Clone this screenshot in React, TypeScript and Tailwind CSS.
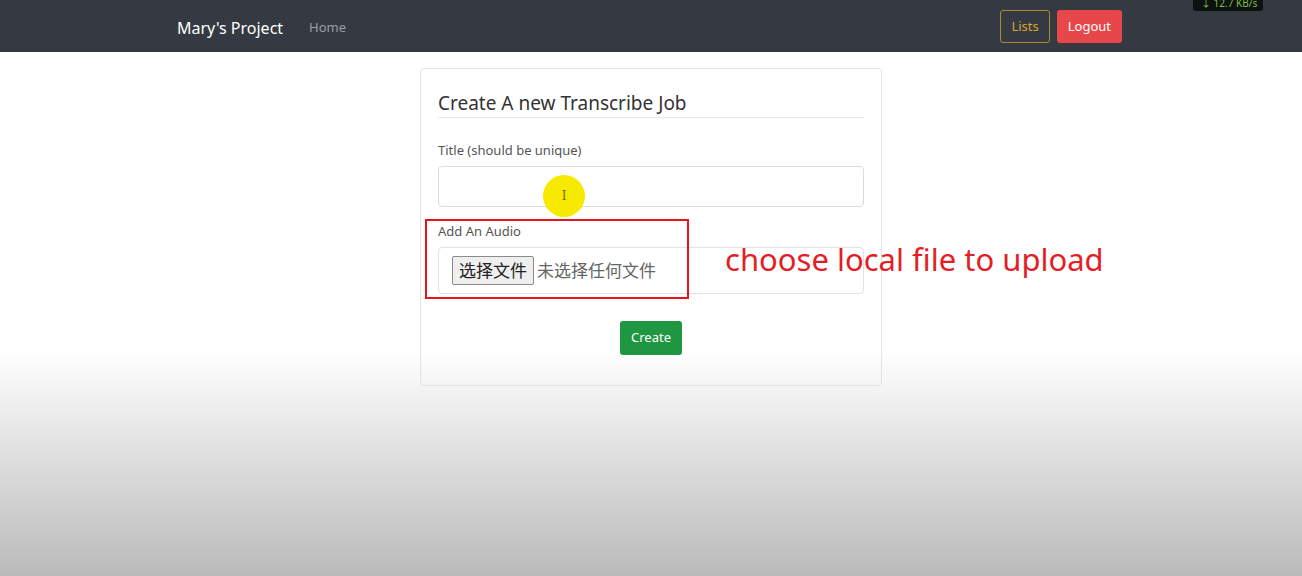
export default function App() {
  return (
    <div
      className="relative min-h-[576px] w-full bg-[linear-gradient(to_bottom,#ffffff_0px,#ffffff_350px,#bababa_576px)] text-[#333] overflow-hidden"
      style={{ fontFamily: '"Noto Sans", "Open Sans", "Noto Sans CJK SC", sans-serif' }}
    >
      {/* Navbar */}
      <nav className="h-[52px] bg-[#353a42] flex items-center pl-[177px] pr-[180px]">
        <span className="text-[16px] text-white pt-[3px]">Mary's Project</span>
        <span className="ml-[26px] text-[13px] text-[#9a9ea4] pt-[3px]">Home</span>
        <div className="ml-auto flex items-center gap-[7px] pt-[1px]">
          <button className="h-[33px] px-[10px] rounded-[3px] border border-[#a88a2c] text-[13px] text-[#d8a630]">Lists</button>
          <button className="h-[33px] px-[11px] rounded-[3px] bg-[#e8474a] text-[13px] text-white">Logout</button>
        </div>
      </nav>

      {/* network speed overlay */}
      <div className="absolute top-[-4px] left-[1193px] w-[70px] h-[15px] rounded-[3px] bg-[#0e1112] text-[10px] leading-[15px] text-[#7fbf3a] pl-[8px]">
        ↓ 12.7 KB/s
      </div>

      {/* Card */}
      <div className="mt-[16px] w-[462px] border border-[#e3e3e3] rounded-[4px] px-[17px] pt-[20px] pb-[30px] ml-[420px]">
        <h2 className="text-[19px] leading-[28px] text-[#333] border-b border-[#e8e8e8]">Create A new Transcribe Job</h2>

        <div className="mt-[23px] text-[13px] leading-[18px] text-[#555]">Title (should be unique)</div>
        <div className="mt-[7px] h-[41px] rounded-[4px] border border-[#dcdcdc] bg-white"></div>

        <div className="mt-[15px] text-[13px] leading-[18px] text-[#555]">Add An Audio</div>
        <div className="mt-[7px] h-[47px] rounded-[4px] border border-[#e2e2e2] bg-white flex items-center pl-[13px]">
          <span className="h-[29px] px-[6px] flex items-center rounded-[2px] border border-[#8a8a8a] bg-[#efefef] text-[17px] text-[#222]">选择文件</span>
          <span className="ml-[3px] text-[17px] text-[#666]">未选择任何文件</span>
        </div>

        <div className="mt-[27px] flex justify-center">
          <button className="h-[34px] px-[11px] rounded-[3px] bg-[#1f9742] text-[13px] text-white">Create</button>
        </div>
      </div>

      {/* annotation box */}
      <div className="absolute left-[425px] top-[219px] w-[264px] h-[80px] border-2 border-[#e5141d] pointer-events-none"></div>
      <div className="absolute left-[725px] top-[237px] text-[31px] leading-[44px] text-[#e41e26]">choose local file to upload</div>

      {/* cursor highlight */}
      <div className="absolute left-[543px] top-[175px] w-[42px] h-[42px] rounded-full bg-[#f6ea00] flex items-center justify-center pointer-events-none">
        <span className="text-[12px] text-[#7a6a20]" style={{ fontFamily: '"DejaVu Serif", serif' }}>I</span>
      </div>
    </div>
  )
}
